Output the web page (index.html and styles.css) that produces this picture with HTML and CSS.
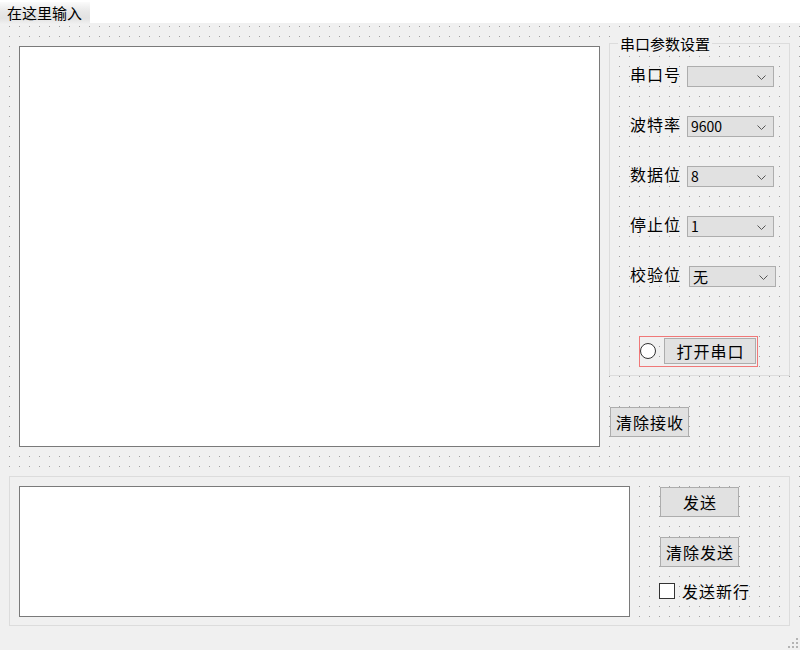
FILE: index.html
```html
<!DOCTYPE html>
<html lang="zh-CN">
<head>
<meta charset="utf-8">
<title>串口助手</title>
<link rel="stylesheet" href="styles.css">
</head>
<body>
<div class="menubar"><span class="menu-item">在这里输入</span></div>
<div class="central">
  <div class="top">
    <div class="textbox recv"></div>
    <div class="side">
      <div class="group serial">
        <span class="group-title">串口参数设置</span>
        <div class="rows">
          <div class="row"><span class="label">串口号</span><div class="combo"><span class="combo-text"></span><svg class="chev" width="9" height="5" viewBox="0 0 9 5"><polyline points="0.5,0.5 4.5,4.5 8.5,0.5" fill="none" stroke="#555" stroke-width="1"/></svg></div></div>
          <div class="row"><span class="label">波特率</span><div class="combo"><span class="combo-text">9600</span><svg class="chev" width="9" height="5" viewBox="0 0 9 5"><polyline points="0.5,0.5 4.5,4.5 8.5,0.5" fill="none" stroke="#555" stroke-width="1"/></svg></div></div>
          <div class="row"><span class="label">数据位</span><div class="combo"><span class="combo-text">8</span><svg class="chev" width="9" height="5" viewBox="0 0 9 5"><polyline points="0.5,0.5 4.5,4.5 8.5,0.5" fill="none" stroke="#555" stroke-width="1"/></svg></div></div>
          <div class="row"><span class="label">停止位</span><div class="combo"><span class="combo-text">1</span><svg class="chev" width="9" height="5" viewBox="0 0 9 5"><polyline points="0.5,0.5 4.5,4.5 8.5,0.5" fill="none" stroke="#555" stroke-width="1"/></svg></div></div>
          <div class="row"><span class="label label-wide">校验位</span><div class="combo"><span class="combo-text cjk">无</span><svg class="chev" width="9" height="5" viewBox="0 0 9 5"><polyline points="0.5,0.5 4.5,4.5 8.5,0.5" fill="none" stroke="#555" stroke-width="1"/></svg></div></div>
        </div>
        <div class="open-frame">
          <span class="radio"></span>
          <div class="btn btn-open">打开串口</div>
        </div>
      </div>
      <div class="btn btn-clear-recv">清除接收</div>
    </div>
  </div>
  <div class="group send-group">
    <div class="textbox send"></div>
    <div class="send-side">
      <div class="btn btn-send">发送</div>
      <div class="btn btn-clear-send">清除发送</div>
      <div class="check-row"><span class="checkbox"></span><span class="check-label">发送新行</span></div>
    </div>
  </div>
</div>
<div class="statusbar">
  <svg class="grip" width="12" height="12" viewBox="0 0 12 12">
    <rect x="9" y="1" width="2" height="2" fill="#b4b4b4"/>
    <rect x="9" y="5" width="2" height="2" fill="#b4b4b4"/>
    <rect x="5" y="5" width="2" height="2" fill="#b4b4b4"/>
    <rect x="9" y="9" width="2" height="2" fill="#b4b4b4"/>
    <rect x="5" y="9" width="2" height="2" fill="#b4b4b4"/>
    <rect x="1" y="9" width="2" height="2" fill="#b4b4b4"/>
  </svg>
</div>
</body>
</html>
```
FILE: styles.css
```css
* { box-sizing: border-box; }

html, body {
  margin: 0;
  padding: 0;
}

body {
  width: 800px;
  height: 650px;
  overflow: hidden;
  background: #f0f0f0;
  font-family: "Noto Sans CJK SC", "Noto Sans", sans-serif;
  color: #000;
}

.menubar {
  height: 23px;
  background: #fff;
}

.menu-item {
  display: inline-block;
  width: 90px;
  height: 23px;
  padding-left: 7px;
  font-size: 15px;
  line-height: 22px;
  background: linear-gradient(#fbfbfb 0%, #e8e8e8 40%, #e2e2e2 70%, #f2f2f2 100%);
}

.central {
  height: 603px;
  padding: 20px 0 0 9px;
  background-color: #f0f0f0;
  background-image:
    linear-gradient(to right, transparent 1px, #f0f0f0 1px),
    linear-gradient(to bottom, #a0a0a0 1px, transparent 1px);
  background-size: 10px 10px;
  background-position: 9px 3px;
}

.top {
  display: flex;
  align-items: flex-start;
  height: 404px;
}

.textbox {
  background: #fff;
  border: 1px solid #7a7a7a;
}

.recv {
  margin: 3px 0 0 10px;
  width: 581px;
  height: 401px;
}

.side {
  margin-left: 9px;
  width: 181px;
  display: flex;
  flex-direction: column;
  align-items: flex-start;
}

.group {
  border: 1px solid #dcdcdc;
  position: relative;
}

.serial {
  width: 181px;
  height: 333px;
  padding: 22px 0 0 20px;
}

.group-title {
  position: absolute;
  left: 8px;
  top: -9px;
  padding: 0 2px;
  font-size: 15px;
  line-height: 17px;
  background: #f0f0f0;
  white-space: nowrap;
}

.rows {
  display: flex;
  flex-direction: column;
  gap: 29px;
}

.row {
  display: flex;
  align-items: flex-start;
  height: 21px;
}

.label {
  width: 57px;
  font-size: 16px;
  line-height: 17px;
  letter-spacing: 1px;
  white-space: nowrap;
}

.label-wide {
  width: 59px;
}

.combo {
  width: 87px;
  height: 21px;
  background: #e1e1e1;
  border: 1px solid #adadad;
  display: flex;
  align-items: center;
  justify-content: space-between;
  padding: 0 7px 0 3px;
}

.combo-text {
  font-size: 14px;
  line-height: 19px;
}

.combo-text.cjk {
  font-size: 15px;
}

.chev {
  display: block;
  margin-top: 1px;
}

.open-frame {
  margin: 49px 0 0 9px;
  width: 119px;
  height: 31px;
  border: 1px solid #f07878;
  display: flex;
  align-items: flex-start;
}

.radio {
  width: 16px;
  height: 16px;
  margin-top: 6px;
  border: 1px solid #333;
  border-radius: 50%;
  background: #fff;
}

.btn {
  background: #e1e1e1;
  border: 1px solid #adadad;
  display: flex;
  align-items: center;
  justify-content: center;
  font-size: 16px;
  letter-spacing: 1px;
  line-height: 18px;
  white-space: nowrap;
  padding-left: 1px;
}

.btn-open {
  width: 92px;
  height: 26px;
  margin: 1px 0 0 8px;
}

.btn-clear-recv {
  width: 79px;
  height: 30px;
  margin: 31px 0 0 1px;
}

.send-group {
  margin-top: 29px;
  width: 781px;
  height: 150px;
  padding: 9px 0 0 9px;
  display: flex;
  align-items: flex-start;
}

.send {
  width: 611px;
  height: 131px;
}

.send-side {
  margin-left: 30px;
  display: flex;
  flex-direction: column;
  align-items: flex-start;
}

.btn-send {
  width: 79px;
  height: 30px;
  margin-top: 1px;
}

.btn-clear-send {
  width: 79px;
  height: 30px;
  margin-top: 20px;
}

.check-row {
  display: flex;
  align-items: center;
  margin: 15px 0 0 -1px;
  height: 18px;
}

.checkbox {
  width: 16px;
  height: 16px;
  border: 1px solid #333;
  background: #fff;
}

.check-label {
  margin-left: 7px;
  font-size: 16px;
  line-height: 18px;
  letter-spacing: 1px;
}

.statusbar {
  height: 24px;
  display: flex;
  justify-content: flex-end;
  align-items: flex-end;
  padding: 0 1px 1px 0;
}

.grip {
  display: block;
}
```
